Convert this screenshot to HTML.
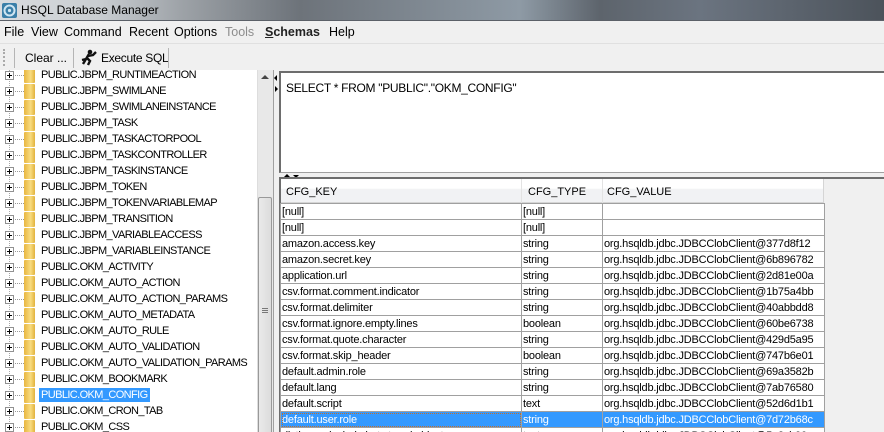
<!DOCTYPE html>
<html style="width:884px;height:432px;overflow:hidden"><head><style>
*{margin:0;padding:0;box-sizing:border-box}
body{width:884px;height:432px;overflow:hidden;background:#f0f0f0;font-family:"Liberation Sans",Tahoma,sans-serif;font-size:11px;color:#000;position:relative}
.abs{position:absolute}
#title{left:0;top:0;width:884px;height:21px;background:linear-gradient(90deg,#d9dcdf 0,#c9cdd1 100px,#9ea3a8 180px,#6d737a 300px,#8e9aa5 520px,#5d646c 600px,#6b7480 700px,#4c535b 884px);border-bottom:1px solid #5b6068}
#title span{position:absolute;left:21px;top:3px;font-size:12px;color:#000;font-family:"Liberation Sans",sans-serif}
#menu{left:0;top:22px;width:884px;height:21px;background:#f0f0f0;font-size:12.5px}
#menu span{position:absolute;top:3px}
#tb{left:0;top:43px;width:884px;height:27px;background:#f0f0f0;border-top:1px solid #e0e0e0}
.tr{position:absolute;left:0;height:16px;width:258px}
.tr .pl{position:absolute;left:5px;top:4px;width:9px;height:9px;border:1px solid #919191;background:#fff}
.tr .pl:before{content:"";position:absolute;left:1px;top:3px;width:5px;height:1px;background:#000}
.tr .pl:after{content:"";position:absolute;left:3px;top:1px;width:1px;height:5px;background:#000}
.tr .dl{position:absolute;left:15px;top:8px;width:9px;border-top:1px dotted #999}
.tr .fd{position:absolute;left:24px;top:1px;width:11px;height:15px;background:linear-gradient(90deg,#e8b640,#f8dc80 60%,#e2b23c);border-radius:1px}
.tr .t{position:absolute;left:39px;top:1px;font-size:11px;letter-spacing:-0.6px;white-space:nowrap;padding:0 2px;line-height:14px}
.sel{background:#3399ff;color:#fff}
table{border-collapse:collapse;position:absolute;left:280px;top:203px;table-layout:fixed}
td{height:16px;border:1px solid #a0a0a0;font-size:11px;letter-spacing:-0.2px;padding:0 1px;white-space:nowrap;overflow:hidden;line-height:14px}
tr.s td{background:#3399ff;color:#fff}
</style></head><body>
<div id="title" class="abs">
<svg class="abs" style="left:2px;top:3px" width="15" height="15"><rect x="0" y="0" width="15" height="15" rx="2" fill="#3a7fa8"/><circle cx="7.5" cy="7.5" r="5" fill="none" stroke="#cfe6f2" stroke-width="2"/><circle cx="7.5" cy="7.5" r="1.6" fill="#cfe6f2"/></svg>
<span>HSQL Database Manager</span></div>
<div id="menu" class="abs">
<span style="left:4px">File</span><span style="left:31px">View</span><span style="left:64px">Command</span><span style="left:129px">Recent</span><span style="left:174px">Options</span><span style="left:225px;color:#8d8d8d">Tools</span><span style="left:265px;font-weight:bold;color:#222"><u>S</u>chemas</span><span style="left:329px">Help</span>
</div>
<div id="tb" class="abs">
<div class="abs" style="left:3px;top:5px;width:2px;height:17px;border-left:2px dotted #aaa"></div>
<div class="abs" style="left:14px;top:4px;width:1px;height:20px;background:#b5b5b5"></div>
<span class="abs" style="left:25px;top:7px;font-size:12px">Clear ...</span>
<div class="abs" style="left:73px;top:4px;width:1px;height:20px;background:#b5b5b5"></div>
<svg class="abs" style="left:80px;top:5px" width="18" height="17"><circle cx="10" cy="3" r="2.3" fill="#111"/><path d="M9 5 L6 10 L2 11 M8 7 L13 6 L16 3 M7 9 L10 12 L8 16 M6 10 L3 15" stroke="#111" stroke-width="2.4" fill="none"/></svg>
<span class="abs" style="left:101px;top:7px;font-size:12px;letter-spacing:-0.3px">Execute SQL</span>
<div class="abs" style="left:168px;top:4px;width:1px;height:20px;background:#b5b5b5"></div>
</div>
<!-- tree -->
<div class="abs" style="left:0;top:70px;width:258px;height:362px;background:#fff;overflow:hidden">
<div class="abs" style="left:9px;top:0;height:362px;border-left:1px dotted #aaa"></div>
<div class="tr" style="top:-3px"><div class="pl"></div><div class="dl"></div><div class="fd"></div><div class="t">PUBLIC.JBPM_RUNTIMEACTION</div></div>
<div class="tr" style="top:13px"><div class="pl"></div><div class="dl"></div><div class="fd"></div><div class="t">PUBLIC.JBPM_SWIMLANE</div></div>
<div class="tr" style="top:29px"><div class="pl"></div><div class="dl"></div><div class="fd"></div><div class="t">PUBLIC.JBPM_SWIMLANEINSTANCE</div></div>
<div class="tr" style="top:45px"><div class="pl"></div><div class="dl"></div><div class="fd"></div><div class="t">PUBLIC.JBPM_TASK</div></div>
<div class="tr" style="top:61px"><div class="pl"></div><div class="dl"></div><div class="fd"></div><div class="t">PUBLIC.JBPM_TASKACTORPOOL</div></div>
<div class="tr" style="top:77px"><div class="pl"></div><div class="dl"></div><div class="fd"></div><div class="t">PUBLIC.JBPM_TASKCONTROLLER</div></div>
<div class="tr" style="top:93px"><div class="pl"></div><div class="dl"></div><div class="fd"></div><div class="t">PUBLIC.JBPM_TASKINSTANCE</div></div>
<div class="tr" style="top:109px"><div class="pl"></div><div class="dl"></div><div class="fd"></div><div class="t">PUBLIC.JBPM_TOKEN</div></div>
<div class="tr" style="top:125px"><div class="pl"></div><div class="dl"></div><div class="fd"></div><div class="t">PUBLIC.JBPM_TOKENVARIABLEMAP</div></div>
<div class="tr" style="top:141px"><div class="pl"></div><div class="dl"></div><div class="fd"></div><div class="t">PUBLIC.JBPM_TRANSITION</div></div>
<div class="tr" style="top:157px"><div class="pl"></div><div class="dl"></div><div class="fd"></div><div class="t">PUBLIC.JBPM_VARIABLEACCESS</div></div>
<div class="tr" style="top:173px"><div class="pl"></div><div class="dl"></div><div class="fd"></div><div class="t">PUBLIC.JBPM_VARIABLEINSTANCE</div></div>
<div class="tr" style="top:189px"><div class="pl"></div><div class="dl"></div><div class="fd"></div><div class="t">PUBLIC.OKM_ACTIVITY</div></div>
<div class="tr" style="top:205px"><div class="pl"></div><div class="dl"></div><div class="fd"></div><div class="t">PUBLIC.OKM_AUTO_ACTION</div></div>
<div class="tr" style="top:221px"><div class="pl"></div><div class="dl"></div><div class="fd"></div><div class="t">PUBLIC.OKM_AUTO_ACTION_PARAMS</div></div>
<div class="tr" style="top:237px"><div class="pl"></div><div class="dl"></div><div class="fd"></div><div class="t">PUBLIC.OKM_AUTO_METADATA</div></div>
<div class="tr" style="top:253px"><div class="pl"></div><div class="dl"></div><div class="fd"></div><div class="t">PUBLIC.OKM_AUTO_RULE</div></div>
<div class="tr" style="top:269px"><div class="pl"></div><div class="dl"></div><div class="fd"></div><div class="t">PUBLIC.OKM_AUTO_VALIDATION</div></div>
<div class="tr" style="top:285px"><div class="pl"></div><div class="dl"></div><div class="fd"></div><div class="t">PUBLIC.OKM_AUTO_VALIDATION_PARAMS</div></div>
<div class="tr" style="top:301px"><div class="pl"></div><div class="dl"></div><div class="fd"></div><div class="t">PUBLIC.OKM_BOOKMARK</div></div>
<div class="tr" style="top:317px"><div class="pl"></div><div class="dl"></div><div class="fd"></div><div class="t sel">PUBLIC.OKM_CONFIG</div></div>
<div class="tr" style="top:333px"><div class="pl"></div><div class="dl"></div><div class="fd"></div><div class="t">PUBLIC.OKM_CRON_TAB</div></div>
<div class="tr" style="top:349px"><div class="pl"></div><div class="dl"></div><div class="fd"></div><div class="t">PUBLIC.OKM_CSS</div></div>
</div>
<!-- tree scrollbar -->
<div class="abs" style="left:257px;top:70px;width:16px;height:362px;background:#e8e8e8;border-left:1px solid #ddd"></div>
<div class="abs" style="left:261px;top:75px;width:0;height:0;border-left:4px solid transparent;border-right:4px solid transparent;border-bottom:4px solid #444"></div>
<div class="abs" style="left:258px;top:197px;width:14px;height:240px;background:linear-gradient(90deg,#eaeaea,#dcdcdc);border:1px solid #999;border-radius:2px"></div>
<div class="abs" style="left:262px;top:308px;width:6px;height:5px;border-top:1px solid #777;border-bottom:1px solid #777"></div>
<div class="abs" style="left:262px;top:310px;width:6px;height:1px;background:#777"></div>
<div class="abs" style="left:273px;top:70px;width:1px;height:362px;background:#a0a0a0"></div>
<!-- splitter arrows -->
<div class="abs" style="left:274px;top:75px;width:0;height:0;border-top:3px solid transparent;border-bottom:3px solid transparent;border-right:3px solid #000"></div>
<div class="abs" style="left:275px;top:86px;width:0;height:0;border-top:3px solid transparent;border-bottom:3px solid transparent;border-left:3px solid #000"></div>
<!-- SQL area -->
<div class="abs" style="left:279px;top:71px;width:605px;height:102px;background:#fff;border-top:2px solid #6d6d6d;border-left:2px solid #6d6d6d;border-bottom:1px solid #a0a0a0"></div>
<span class="abs" style="left:286px;top:81px;font-size:12px;letter-spacing:-0.3px">SELECT * FROM "PUBLIC"."OKM_CONFIG"</span>
<div class="abs" style="left:284px;top:174px;width:0;height:0;border-left:3px solid transparent;border-right:3px solid transparent;border-bottom:3px solid #000"></div>
<div class="abs" style="left:293px;top:175px;width:0;height:0;border-left:3px solid transparent;border-right:3px solid transparent;border-top:3px solid #000"></div>
<!-- table -->
<div class="abs" style="left:279px;top:177px;width:605px;height:255px;background:#f0f0f0;border-top:2px solid #6d6d6d;border-left:2px solid #6d6d6d"></div>
<div class="abs" style="left:281px;top:179px;width:543px;height:24px;background:linear-gradient(#fff,#fff 40%,#f1f2f4 45%,#f1f2f4);border-bottom:1px solid #d5d5d5;border-right:1px solid #d5d5d5"></div>
<div class="abs" style="left:521px;top:179px;width:1px;height:24px;background:#e3e3e3"></div>
<div class="abs" style="left:602px;top:179px;width:1px;height:24px;background:#e3e3e3"></div>
<span class="abs" style="left:286px;top:186px">CFG_KEY</span>
<span class="abs" style="left:528px;top:186px">CFG_TYPE</span>
<span class="abs" style="left:607px;top:186px">CFG_VALUE</span>
<div class="abs" style="left:281px;top:203px;width:544px;height:229px;background:#fff"></div>
<div class="abs" style="left:0;top:203px;width:884px;height:229px;overflow:hidden">
<table style="top:0">
<colgroup><col style="width:241px"><col style="width:81px"><col style="width:222px"></colgroup>
<tr><td>[null]</td><td>[null]</td><td></td></tr>
<tr><td>[null]</td><td>[null]</td><td></td></tr>
<tr><td>amazon.access.key</td><td>string</td><td>org.hsqldb.jdbc.JDBCClobClient@377d8f12</td></tr>
<tr><td>amazon.secret.key</td><td>string</td><td>org.hsqldb.jdbc.JDBCClobClient@6b896782</td></tr>
<tr><td>application.url</td><td>string</td><td>org.hsqldb.jdbc.JDBCClobClient@2d81e00a</td></tr>
<tr><td>csv.format.comment.indicator</td><td>string</td><td>org.hsqldb.jdbc.JDBCClobClient@1b75a4bb</td></tr>
<tr><td>csv.format.delimiter</td><td>string</td><td>org.hsqldb.jdbc.JDBCClobClient@40abbdd8</td></tr>
<tr><td>csv.format.ignore.empty.lines</td><td>boolean</td><td>org.hsqldb.jdbc.JDBCClobClient@60be6738</td></tr>
<tr><td>csv.format.quote.character</td><td>string</td><td>org.hsqldb.jdbc.JDBCClobClient@429d5a95</td></tr>
<tr><td>csv.format.skip_header</td><td>boolean</td><td>org.hsqldb.jdbc.JDBCClobClient@747b6e01</td></tr>
<tr><td>default.admin.role</td><td>string</td><td>org.hsqldb.jdbc.JDBCClobClient@69a3582b</td></tr>
<tr><td>default.lang</td><td>string</td><td>org.hsqldb.jdbc.JDBCClobClient@7ab76580</td></tr>
<tr><td>default.script</td><td>text</td><td>org.hsqldb.jdbc.JDBCClobClient@52d6d1b1</td></tr>
<tr class="s"><td style="outline:1px dotted #c07030;outline-offset:-2px">default.user.role</td><td>string</td><td>org.hsqldb.jdbc.JDBCClobClient@7d72b68c</td></tr>
<tr><td>dictionary.include.hot.stored.objects</td><td>text</td><td>org.hsqldb.jdbc.JDBCClobClient@5e2cb90c</td></tr>
</table>
</div>
</body></html>
